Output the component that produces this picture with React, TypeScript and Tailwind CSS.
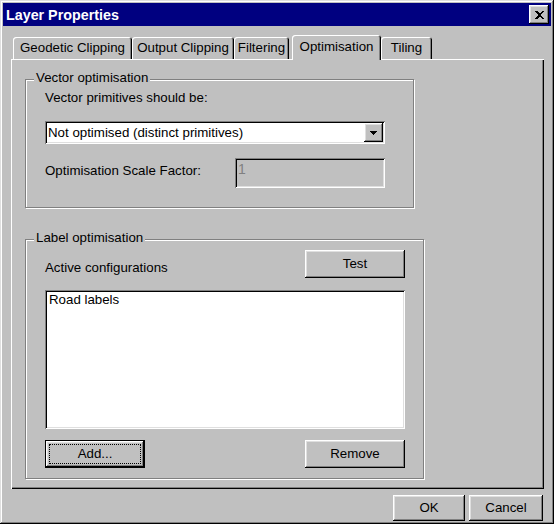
const raised =
  "shadow-[inset_-1px_-1px_#000,inset_1px_1px_#fff,inset_-2px_-2px_#808080,inset_2px_2px_#dfdfdf]";
const sunken =
  "shadow-[inset_1px_1px_#808080,inset_-1px_-1px_#fff,inset_2px_2px_#000,inset_-2px_-2px_#dfdfdf]";
const tabEdge =
  "shadow-[inset_1px_1px_#fff,inset_-1px_0_#000,inset_-2px_0_#808080]";

function Button({ label, className = "" }: { label: string; className?: string }) {
  return (
    <button
      type="button"
      className={`flex items-center justify-center bg-[#c0c0c0] ${raised} ${className}`}
    >
      {label}
    </button>
  );
}

function DefaultButton({ label, className = "" }: { label: string; className?: string }) {
  return (
    <button type="button" className={`flex border border-black bg-[#c0c0c0] ${className}`}>
      <span className={`flex flex-1 p-[3px] ${raised}`}>
        <span className="flex flex-1 items-center justify-center border border-dotted border-black">
          {label}
        </span>
      </span>
    </button>
  );
}

function GroupBox({
  label,
  className = "",
  children,
}: {
  label: string;
  className?: string;
  children: React.ReactNode;
}) {
  return (
    <div
      className={`relative border border-[#808080] shadow-[inset_1px_1px_#fff,1px_1px_#fff] ${className}`}
    >
      <span className="absolute -top-[10px] left-[8px] bg-[#c0c0c0] px-[2px] leading-[16px]">
        {label}
      </span>
      {children}
    </div>
  );
}

function Tab({ label, width, selected }: { label: string; width: string; selected?: boolean }) {
  if (selected) {
    return (
      <div
        className={`relative z-10 -mb-px ml-[3px] h-[25px] rounded-t-[3px] bg-[#c0c0c0] pt-[4px] text-center ${width} ${tabEdge}`}
      >
        {label}
      </div>
    );
  }
  return (
    <div className={`mt-[2px] h-[22px] rounded-t-[3px] pt-[3px] text-center ${width} ${tabEdge}`}>
      {label}
    </div>
  );
}

export default function App() {
  return (
    <div
      className={`flex h-[524px] w-[554px] flex-col bg-[#c0c0c0] p-[3px] font-['Liberation_Sans',Arial,sans-serif] text-[13.3px] leading-[16px] text-black shadow-[inset_-1px_-1px_#000,inset_1px_1px_#dfdfdf,inset_-2px_-2px_#808080,inset_2px_2px_#fff]`}
    >
      {/* Title bar */}
      <div className="flex h-[23px] items-center justify-between bg-[#000080] pl-[3px] pr-[2px]">
        <span className="text-[14.3px] font-bold text-white">Layer Properties</span>
        <button
          type="button"
          className={`flex h-[19px] w-[20px] items-center justify-center bg-[#c0c0c0] ${raised}`}
        >
          <svg width="9" height="8" viewBox="0 0 9 8" shapeRendering="crispEdges">
            <path d="M0 0h2l2.5 2.5L7 0h2L5.5 4 9 8H7L4.5 5.5 2 8H0l3.5-4z" fill="#000" />
          </svg>
        </button>
      </div>

      <div className="flex flex-1 flex-col pl-[8px] pr-[7px]">
        {/* Tabs */}
        <div className="mt-[9px] flex h-[24px] items-start pl-[2px]">
          <Tab label="Geodetic Clipping" width="w-[119px]" />
          <Tab label="Output Clipping" width="w-[102px]" />
          <Tab label="Filtering" width="w-[55px]" />
          <Tab label="Optimisation" width="w-[89px]" selected />
          <Tab label="Tiling" width="w-[51px]" />
        </div>

        {/* Tab page */}
        <div
          className="flex h-[430px] w-[533px] flex-col pl-[14px] pt-[20px] shadow-[inset_1px_1px_#fff,inset_-1px_-1px_#000,inset_-2px_-2px_#808080]"
        >
          <GroupBox label="Vector optimisation" className="w-[389px] pb-[19px] pl-[19px] pt-[10px]">
            <div className="flex w-[340px] flex-col">
              <div>Vector primitives should be:</div>
              <div className={`mt-[15px] flex h-[23px] bg-white p-[2px] ${sunken}`}>
                <div className="flex flex-1 items-center pl-[1px]">
                  Not optimised (distinct primitives)
                </div>
                <div className={`flex w-[19px] items-center justify-center bg-[#c0c0c0] ${raised}`}>
                  <svg width="7" height="4" viewBox="0 0 7 4" shapeRendering="crispEdges">
                    <path d="M0 0h7L3.5 4z" fill="#000" />
                  </svg>
                </div>
              </div>
              <div className="mt-[14px] flex items-start justify-between">
                <span className="mt-[5px]">Optimisation Scale Factor:</span>
                <div
                  className={`h-[30px] w-[150px] bg-[#c0c0c0] px-[3px] pt-[3px] text-[14px] text-[#808080] ${sunken}`}
                >
                  1
                </div>
              </div>
            </div>
          </GroupBox>

          <GroupBox label="Label optimisation" className="mt-[31px] w-[399px] pb-[10px] pl-[19px] pt-[10px]">
            <div className="flex w-[360px] flex-col">
              <div className="flex items-start justify-between">
                <span className="mt-[10px]">Active configurations</span>
                <Button label="Test" className="h-[28px] w-[100px]" />
              </div>
              <div className={`mt-[12px] h-[139px] bg-white px-[4px] pt-[2px] ${sunken}`}>
                Road labels
              </div>
              <div className="mt-[11px] flex justify-between">
                <DefaultButton label="Add..." className="h-[28px] w-[100px]" />
                <Button label="Remove" className="h-[28px] w-[100px]" />
              </div>
            </div>
          </GroupBox>
        </div>

        {/* Dialog buttons */}
        <div className="mt-[6px] flex justify-end gap-[4px] pr-[1px]">
          <Button label="OK" className="h-[26px] w-[72px]" />
          <Button label="Cancel" className="h-[26px] w-[74px]" />
        </div>
      </div>
    </div>
  );
}
